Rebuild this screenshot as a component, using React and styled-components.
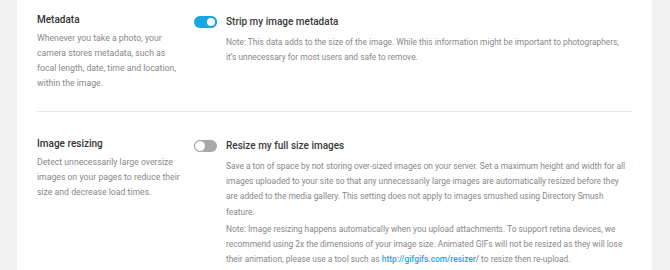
import React, { useState } from 'react';
import styled, { createGlobalStyle } from 'styled-components';

const GlobalStyle = createGlobalStyle`
  html, body {
    margin: 0;
    padding: 0;
    background: #f1f1f1;
    font-family: Roboto, "Liberation Sans", Arial, sans-serif;
    -webkit-font-smoothing: antialiased;
  }
`;

const Page = styled.div`
  display: flex;
  min-height: 100vh;
  padding: 0 18px 0 17px;
  background: #f1f1f1;
`;

const Panel = styled.div`
  flex: 1;
  padding: 0 20px;
  background: #fff;
`;

const Row = styled.section`
  display: flex;
  padding: ${p => (p.$first ? '12px' : '24px')} 0 ${p => (p.$last ? '0' : '20px')};
  border-bottom: ${p => (p.$last ? 'none' : '1px solid #e8e8e8')};
`;

const Side = styled.div`
  flex: 0 0 145px;
  padding-right: 12px;
`;

const Title = styled.h3`
  margin: 0;
  font-size: 10px;
  line-height: 16px;
  font-weight: 500;
  color: #333;
`;

const Description = styled.p`
  margin: 3px 0 0;
  font-size: 8.7px;
  line-height: 15px;
  color: #888;
`;

const Main = styled.div`
  flex: 1;
  min-width: 0;
  padding: 2px 2.5px 0 0;
`;

const ToggleLine = styled.div`
  display: flex;
  align-items: center;
  gap: 9px;
  height: 16px;
  margin-bottom: 5px;
`;

const Track = styled.span`
  position: relative;
  display: inline-block;
  flex: 0 0 23px;
  height: 12px;
  border-radius: 6px;
  background: ${p => (p.$on ? '#17a8e3' : '#a8a8a8')};
  cursor: pointer;
`;

const Knob = styled.span`
  position: absolute;
  top: 0;
  left: ${p => (p.$on ? '11px' : '0')};
  width: 12px;
  height: 12px;
  box-sizing: border-box;
  border-radius: 50%;
  background: #fff;
  border: ${p => (p.$on ? '2px solid #17a8e3' : '1px solid #a0a0a0')};
`;

const Label = styled.span`
  font-size: 10px;
  font-weight: 500;
  color: #3a3a3a;
  line-height: 16px;
`;

const Note = styled.p`
  margin: 0 0 2px;
  padding-left: 32px;
  font-size: 8.4px;
  line-height: 15.2px;
  color: #888;
`;

const Link = styled.a`
  color: #17a8e3;
  font-weight: 500;
  text-decoration: none;
`;

const settings = [
  {
    id: 'strip',
    title: 'Metadata',
    description:
      'Whenever you take a photo, your camera stores metadata, such as focal length, date, time and location, within the image.',
    label: 'Strip my image metadata',
    checked: true,
    notes: [
      'Note: This data adds to the size of the image. While this information might be important to photographers, it’s unnecessary for most users and safe to remove.',
    ],
  },
  {
    id: 'resize',
    title: 'Image resizing',
    description:
      'Detect unnecessarily large oversize images on your pages to reduce their size and decrease load times.',
    label: 'Resize my full size images',
    checked: false,
    notes: [
      'Save a ton of space by not storing over-sized images on your server. Set a maximum height and width for all images uploaded to your site so that any unnecessarily large images are automatically resized before they are added to the media gallery. This setting does not apply to images smushed using Directory Smush feature.',
      <>
        Note: Image resizing happens automatically when you upload attachments. To support
        retina devices, we recommend using 2x the dimensions of your image size. Animated GIFs
        will not be resized as they will lose their animation, please use a tool such as{' '}
        <Link href="#">http://gifgifs.com/resizer/</Link> to resize then re-upload.
      </>,
    ],
  },
];

const Toggle = ({ checked, onChange }) => (
  <Track $on={checked} onClick={onChange}>
    <Knob $on={checked} />
  </Track>
);

const App = () => {
  const [values, setValues] = useState(
    Object.fromEntries(settings.map(s => [s.id, s.checked]))
  );

  return (
    <Page>
      <GlobalStyle />
      <Panel>
        {settings.map((item, index) => (
          <Row key={item.id} $first={index === 0} $last={index === settings.length - 1}>
            <Side>
              <Title>{item.title}</Title>
              <Description>{item.description}</Description>
            </Side>
            <Main>
              <ToggleLine>
                <Toggle
                  checked={values[item.id]}
                  onChange={() => setValues({ ...values, [item.id]: !values[item.id] })}
                />
                <Label>{item.label}</Label>
              </ToggleLine>
              {item.notes.map((note, i) => (
                <Note key={i}>{note}</Note>
              ))}
            </Main>
          </Row>
        ))}
      </Panel>
    </Page>
  );
};

export default App;
